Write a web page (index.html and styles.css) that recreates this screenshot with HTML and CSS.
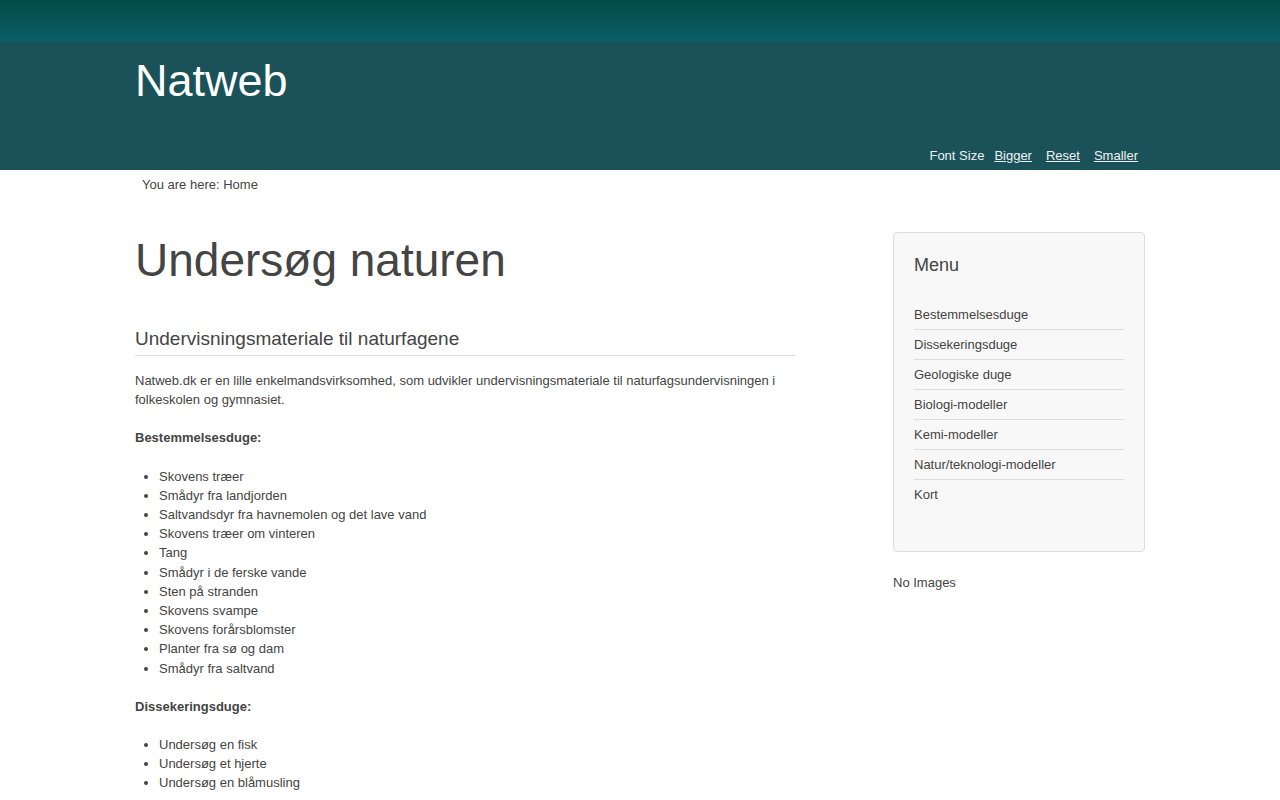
FILE: index.html
```html
<!DOCTYPE html>
<html lang="da">
<head>
<meta charset="utf-8">
<title>Natweb - Undersøg naturen</title>
<link rel="stylesheet" href="styles.css">
</head>
<body>
<header class="site-header">
  <div class="topband"></div>
  <div class="mastbar">
    <div class="container mast-inner">
      <div class="site-title">Natweb</div>
      <div class="fontsize">
        <span class="fs-label">Font Size</span>
        <a href="#">Bigger</a>
        <a href="#">Reset</a>
        <a href="#">Smaller</a>
      </div>
    </div>
  </div>
</header>
<div class="container">
  <div class="breadcrumb">You are here: Home</div>
  <div class="main">
    <div class="content">
      <h1 class="page-title">Undersøg naturen</h1>
      <h2 class="section-title">Undervisningsmateriale til naturfagene</h2>
      <p>Natweb.dk er en lille enkelmandsvirksomhed, som udvikler undervisningsmateriale til naturfagsundervisningen i folkeskolen og gymnasiet.</p>
      <p><strong>Bestemmelsesduge:</strong></p>
      <ul class="items">
        <li>Skovens træer</li>
        <li>Smådyr fra landjorden</li>
        <li>Saltvandsdyr fra havnemolen og det lave vand</li>
        <li>Skovens træer om vinteren</li>
        <li>Tang</li>
        <li>Smådyr i de ferske vande</li>
        <li>Sten på stranden</li>
        <li>Skovens svampe</li>
        <li>Skovens forårsblomster</li>
        <li>Planter fra sø og dam</li>
        <li>Smådyr fra saltvand</li>
      </ul>
      <p><strong>Dissekeringsduge:</strong></p>
      <ul class="items">
        <li>Undersøg en fisk</li>
        <li>Undersøg et hjerte</li>
        <li>Undersøg en blåmusling</li>
      </ul>
    </div>
    <aside class="sidebar">
      <div class="menu-box">
        <h3 class="menu-title">Menu</h3>
        <ul class="menu-list">
          <li><a href="#">Bestemmelsesduge</a></li>
          <li><a href="#">Dissekeringsduge</a></li>
          <li><a href="#">Geologiske duge</a></li>
          <li><a href="#">Biologi-modeller</a></li>
          <li><a href="#">Kemi-modeller</a></li>
          <li><a href="#">Natur/teknologi-modeller</a></li>
          <li><a href="#">Kort</a></li>
        </ul>
      </div>
      <div class="no-images">No Images</div>
    </aside>
  </div>
</div>
</body>
</html>
```

FILE: styles.css
```css
html, body {
  margin: 0;
  padding: 0;
}
body {
  font-family: "Liberation Sans", Arial, Helvetica, sans-serif;
  font-size: 13px;
  line-height: 19.2px;
  color: #444;
  background: #fff;
}
a {
  color: inherit;
}
.container {
  width: 1010px;
  margin: 0 auto;
}
.topband {
  height: 42px;
  background: linear-gradient(to bottom, #024b46 0%, #0a5f66 100%);
}
.mastbar {
  height: 128px;
  background: #1b525a;
}
.mast-inner {
  height: 128px;
  display: flex;
  flex-direction: column;
  box-sizing: border-box;
  padding-top: 14px;
  padding-bottom: 5px;
}
.site-title {
  font-size: 45px;
  line-height: 50px;
  color: #fff;
}
.fontsize {
  margin-top: auto;
  display: flex;
  justify-content: flex-end;
  align-items: center;
  gap: 14px;
  padding-right: 7px;
  line-height: 18px;
  color: #eef2f2;
}
.fontsize .fs-label {
  margin-right: -4px;
}
.fontsize a {
  color: #eef2f2;
  text-decoration: underline;
}
.breadcrumb {
  padding: 6px 0 0 7px;
  line-height: 18px;
}
.main {
  display: flex;
  align-items: flex-start;
  gap: 98px;
  margin-top: 38px;
}
.content {
  width: 660px;
}
.page-title {
  margin: 4px 0 0;
  font-size: 46px;
  font-weight: normal;
  line-height: 48px;
  color: #444;
}
.section-title {
  margin: 44px 0 0;
  padding-bottom: 6px;
  font-size: 19px;
  font-weight: normal;
  line-height: 21px;
  color: #444;
  border-bottom: 1px solid #ddd;
}
.content p {
  margin: 15px 0 19px;
}
.content p + p {
  margin-top: 0;
}
.items {
  margin: 0 0 19px;
  padding-left: 24px;
}
.sidebar {
  width: 252px;
}
.menu-box {
  background: #f8f8f8;
  border: 1px solid #dcdcdc;
  border-radius: 4px;
  padding: 22px 20px 42px;
}
.menu-title {
  margin: 0;
  font-size: 18px;
  font-weight: normal;
  line-height: 20px;
  color: #444;
}
.menu-list {
  list-style: none;
  margin: 25px 0 0;
  padding: 0;
}
.menu-list li {
  padding: 6px 0 5px;
  line-height: 18px;
  border-bottom: 1px solid #dcdcdc;
}
.menu-list li:last-child {
  border-bottom: none;
}
.menu-list a {
  color: #444;
  text-decoration: none;
}
.no-images {
  margin-top: 22px;
  line-height: 18px;
}
```
